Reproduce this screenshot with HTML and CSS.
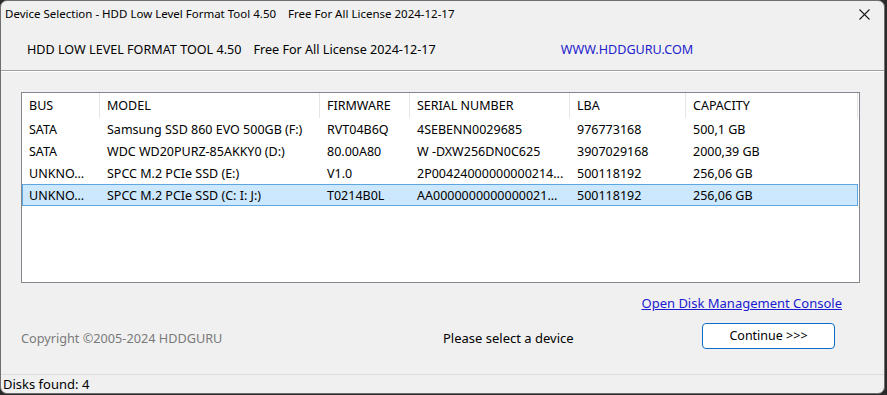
FILE: index.html
```html
<!DOCTYPE html>
<html lang="en">
<head>
  <meta charset="UTF-8" />
  <title>Device Selection - HDD Low Level Format Tool 4.50</title>
  <link rel="stylesheet" href="styles.css">
</head>
<body>

  <div class="window">
    <!-- Barra de título -->
    <div class="titlebar">
      <span class="title">Device Selection - HDD Low Level Format Tool 4.50&nbsp;&nbsp;&nbsp;&nbsp;Free For All License 2024-12-17</span>
      <svg class="close" width="11" height="11" viewBox="0 0 11 11">
        <path d="M0.5 0.5 L10.5 10.5 M10.5 0.5 L0.5 10.5" stroke="#1a1a1a" stroke-width="1.1" fill="none"/>
      </svg>
    </div>

    <div class="header">
      <span class="product">HDD LOW LEVEL FORMAT TOOL 4.50</span>
      <span class="license">Free For All License 2024-12-17</span>
      <span class="site">WWW.HDDGURU.COM</span>
    </div>

    <div class="content">
      <div class="list">
        <table>
          <colgroup>
            <col style="width:78px"><col style="width:220px"><col style="width:90px">
            <col style="width:160px"><col style="width:116px"><col style="width:172px">
          </colgroup>
          <thead>
            <tr>
              <th>BUS</th><th>MODEL</th><th>FIRMWARE</th><th>SERIAL NUMBER</th><th>LBA</th><th>CAPACITY</th>
            </tr>
          </thead>
          <tbody>
            <tr>
              <td>SATA</td><td>Samsung SSD 860 EVO 500GB (F:)</td><td>RVT04B6Q</td><td>4SEBENN0029685</td><td>976773168</td><td>500,1 GB</td>
            </tr>
            <tr>
              <td>SATA</td><td>WDC WD20PURZ-85AKKY0 (D:)</td><td>80.00A80</td><td>W -DXW256DN0C625</td><td>3907029168</td><td>2000,39 GB</td>
            </tr>
            <tr>
              <td>UNKNO...</td><td>SPCC M.2 PCIe SSD (E:)</td><td>V1.0</td><td>2P00424000000000214...</td><td>500118192</td><td>256,06 GB</td>
            </tr>
            <tr class="selected">
              <td>UNKNO...</td><td>SPCC M.2 PCIe SSD (C: I: J:)</td><td>T0214B0L</td><td>AA0000000000000021...</td><td>500118192</td><td>256,06 GB</td>
            </tr>
          </tbody>
        </table>
      </div>

      <div class="link-row">
        <a href="#" class="disk-link">Open Disk Management Console</a>
      </div>

      <div class="bottom-row">
        <span class="copyright">Copyright ©2005-2024 HDDGURU</span>
        <span class="hint">Please select a device</span>
        <button class="continue">Continue &gt;&gt;&gt;</button>
      </div>
    </div>

    <div class="statusbar">Disks found: 4</div>
  </div>

</body>
</html>
```

FILE: styles.css
```css
body {
  margin: 0;
  background: #2a2a2a;
  font-family: 'Noto Sans', 'Open Sans', sans-serif;
  font-size: 12px;
  color: #000;
  overflow: hidden;
}

.window {
  width: 883px;
  height: 392px;
  background: #f0f0f0;
  border: 1px solid #6f6f6f;
  border-radius: 7px;
  display: flex;
  flex-direction: column;
  overflow: hidden;
}

.titlebar {
  height: 27px;
  display: flex;
  align-items: center;
  justify-content: space-between;
  padding: 0 14px 0 4px;
  flex-shrink: 0;
}

.title {
  font-size: 11.5px;
  margin-top: -2px;
}

.header {
  height: 42px;
  display: flex;
  align-items: center;
  padding-left: 26px;
  font-size: 12.6px;
  border-bottom: 1px solid #a0a0a0;
  box-shadow: 0 1px 0 #fff;
  flex-shrink: 0;
}

.license {
  margin-left: 12px;
}

.site {
  margin-left: 125px;
  color: #2222cc;
}

.content {
  flex: 1;
  padding: 21px 0 0 20px;
  border-bottom: 1px solid #dcdcdc;
}

/* Lista de discos */
.list {
  width: 839px;
  height: 191px;
  background: #fff;
  border: 1px solid #828790;
  box-sizing: border-box;
}

.list table {
  border-collapse: separate;
  border-spacing: 0;
  table-layout: fixed;
  width: 836px;
  font-size: 12.5px;
}

.list th,
.list td {
  text-align: left;
  font-weight: normal;
  padding: 0 0 0 7px;
  white-space: nowrap;
  overflow: hidden;
}

.list th {
  height: 25px;
  border-right: 1px solid #e5e5e5;
}

.list td {
  height: 20px;
  border-top: 1px solid transparent;
  border-bottom: 1px solid transparent;
}

.list tr.selected td {
  background: #cce8ff;
  border-top-color: #5ea6e2;
  border-bottom-color: #5ea6e2;
}

.list tr.selected td:first-child {
  border-left: 1px solid #5ea6e2;
  padding-left: 6px;
}

.list tr.selected td:last-child {
  border-right: 1px solid #5ea6e2;
}

.link-row {
  width: 821px;
  text-align: right;
  margin-top: 11px;
  height: 20px;
}

.disk-link {
  color: #1a1ad0;
  font-size: 13px;
}

.bottom-row {
  display: flex;
  align-items: flex-start;
  margin-top: 9px;
  height: 30px;
}

.copyright {
  color: #7a7a7a;
  font-size: 12.7px;
  width: 422px;
  margin-top: 6px;
}

.hint {
  font-size: 13px;
  width: 259px;
  margin-top: 6px;
}

.continue {
  width: 133px;
  height: 26px;
  background: #fff;
  border: 1px solid #0b6fc9;
  border-radius: 4px;
  font-family: inherit;
  font-size: 12.5px;
  padding: 0 0 2px;
}

.statusbar {
  height: 18px;
  line-height: 18px;
  padding-left: 2px;
  font-size: 13px;
  flex-shrink: 0;
}
```
